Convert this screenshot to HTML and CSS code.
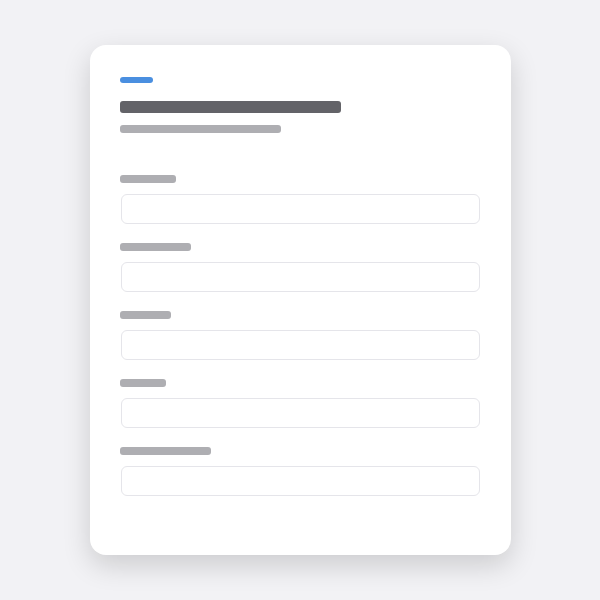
FILE: index.html
```html
<!DOCTYPE html>
<html lang="en">

<head>
    <meta charset="UTF-8">
    <meta name="viewport" content="width=device-width, initial-scale=1.0">
    <title>Form</title>
    <link rel="stylesheet" href="styles.css">
</head>

<body>
    <div class="card">
        <div class="accent"></div>
        <div class="heading"></div>
        <div class="subheading"></div>

        <div class="fields">
            <div class="field">
                <div class="label" style="width: 56px"></div>
                <div class="input"></div>
            </div>
            <div class="field">
                <div class="label" style="width: 71px"></div>
                <div class="input"></div>
            </div>
            <div class="field">
                <div class="label" style="width: 51px"></div>
                <div class="input"></div>
            </div>
            <div class="field">
                <div class="label" style="width: 46px"></div>
                <div class="input"></div>
            </div>
            <div class="field">
                <div class="label" style="width: 91px"></div>
                <div class="input"></div>
            </div>
        </div>
    </div>
</body>

</html>
```

FILE: styles.css
```css
* {
    box-sizing: border-box;
}

body {
    margin: 0;
    height: 100vh;
    display: flex;
    justify-content: center;
    align-items: center;
    background-color: #f2f2f5;
    font-family: "Liberation Sans", sans-serif;
}

.card {
    width: 421px;
    height: 510px;
    padding: 32px 31px 0 30px;
    background-color: #fff;
    border-radius: 16px;
    box-shadow: 0 10px 28px rgba(0, 0, 0, 0.16);
    display: flex;
    flex-direction: column;
}

.accent {
    width: 33px;
    height: 6px;
    border-radius: 3px;
    background-color: #4a8fe0;
}

.heading {
    width: 221px;
    height: 12px;
    margin-top: 18px;
    border-radius: 3px;
    background-color: #636368;
}

.subheading {
    width: 161px;
    height: 8px;
    margin-top: 12px;
    border-radius: 3px;
    background-color: #aeaeb2;
}

.fields {
    margin-top: 42px;
    display: flex;
    flex-direction: column;
    gap: 19px;
}

.field {
    display: flex;
    flex-direction: column;
    gap: 11px;
}

.label {
    height: 8px;
    border-radius: 3px;
    background-color: #aeaeb2;
}

.input {
    height: 30px;
    margin-left: 1px;
    border: 1px solid #e5e5ea;
    border-radius: 6px;
}
```
